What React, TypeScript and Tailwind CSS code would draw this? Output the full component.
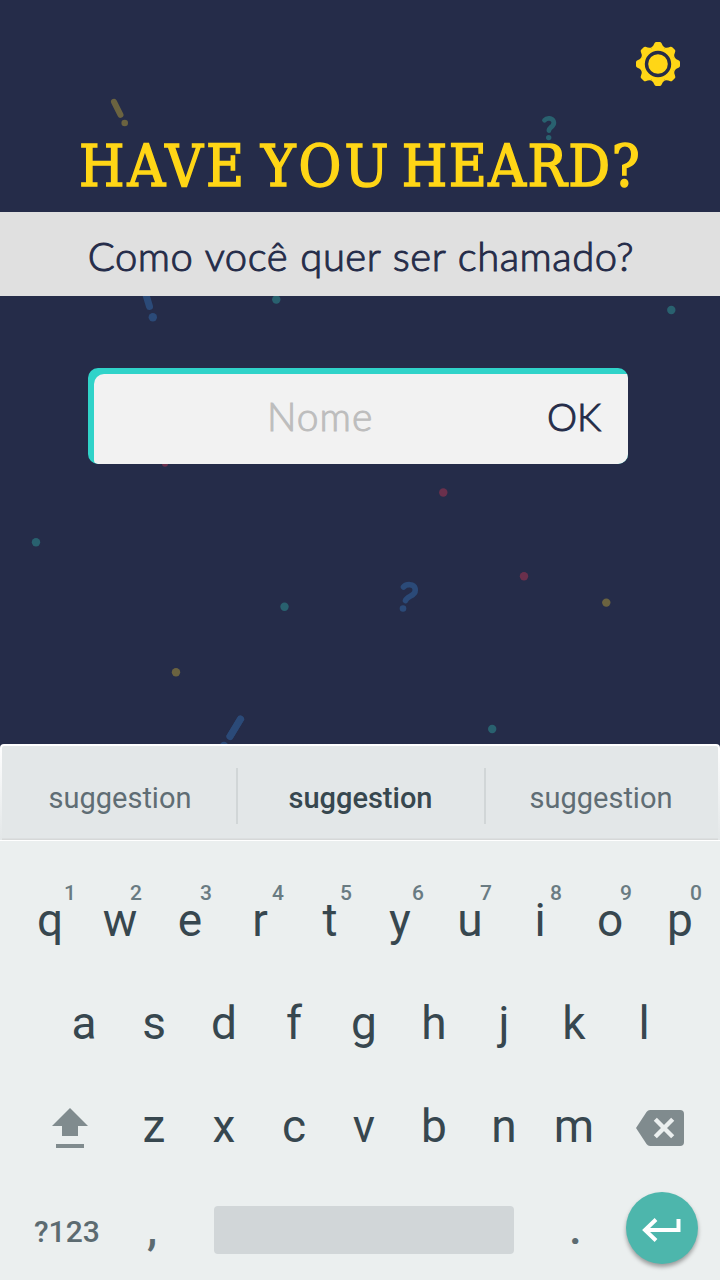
const TOP_KEYS: [string, string, string][] = [
  ["q", "1", "left-[49px]"],
  ["w", "2", "left-[45px]"],
  ["e", "3", "left-[45px]"],
  ["r", "4", "left-[47px]"],
  ["t", "5", "left-[45px]"],
  ["y", "6", "left-[47px]"],
  ["u", "7", "left-[45px]"],
  ["i", "8", "left-[45px]"],
  ["o", "9", "left-[45px]"],
  ["p", "0", "left-[45px]"],
];
const MIDDLE_KEYS = ["a", "s", "d", "f", "g", "h", "j", "k", "l"];
const BOTTOM_KEYS = ["z", "x", "c", "v", "b", "n", "m"];

const DOTS: [number, number, string][] = [
  [276.3, 299.5, "#29616f"],
  [671.3, 310, "#29616f"],
  [443.3, 492.5, "#6a304c"],
  [524, 576.2, "#6a304c"],
  [606.3, 602.6, "#6b6340"],
  [36, 542.3, "#29616f"],
  [284.5, 606.7, "#29616f"],
  [176, 672.2, "#6b6340"],
  [492.2, 729, "#29616f"],
];

function Confetti() {
  return (
    <svg className="absolute inset-0" width="720" height="744" viewBox="0 0 720 744" fill="none" strokeLinecap="round">
      {DOTS.map(([cx, cy, fill]) => (
        <circle key={`${cx}`} cx={cx} cy={cy} r="4.2" fill={fill} />
      ))}
      <circle cx="165" cy="463.7" r="3" fill="#6a304c" />
      <path d="M114 101.800l6.500 13" stroke="#6b6340" strokeWidth="6" />
      <circle cx="124.7" cy="123" r="3.3" fill="#6b6340" />
      <path d="M144.500 290l5 16.500" stroke="#2b4a78" strokeWidth="7" />
      <circle cx="152.8" cy="317.2" r="4.2" fill="#2b4a78" />
      <path d="M241.500 717.500l-12.500 20.500" stroke="#2b4a78" strokeWidth="7" strokeLinecap="butt" />
      <path d="M240.500 719l-10.500 17.500" stroke="#2b4a78" strokeWidth="7" />
      <circle cx="224" cy="746" r="4.2" fill="#2b4a78" />
      <path d="M544.500 120.200c1.200-1.400 3-2 5-1.800 4.300.5 5.500 4.700 3 7.400-1.700 1.800-3.400 2.600-3.600 4.700" stroke="#29616f" strokeWidth="4.8" />
      <circle cx="548.7" cy="137.6" r="2.7" fill="#29616f" />
      <path d="M403.500 587c1.500-1.600 4-2.500 6.500-2.300 6 .5 6.700 6.600 3 9.800-2.700 2.200-6.300 2.700-7.500 6" stroke="#2b4a78" strokeWidth="5.6" />
      <circle cx="403" cy="608.5" r="3.3" fill="#2b4a78" />
    </svg>
  );
}

function SunIcon() {
  return (
    <svg width="44" height="44" viewBox="-22 -22 44 44">
      {[0, 45, 90, 135, 180, 225, 270, 315].map((angle) => (
        <path
          key={angle}
          transform={`rotate(${angle})`}
          d="M-1.800 -22H1.800Q2.800 -22 3.400 -21Q4.800 -17.200 6.900 -16.500L1 0H-1L-6.900 -16.500Q-4.800 -17.200 -3.400 -21Q-2.800 -22 -1.800 -22Z"
          fill="#ffd616"
        />
      ))}
      <circle r="15.5" fill="#ffd616" />
      <circle r="11.5" fill="none" stroke="#252c49" strokeWidth="3.4" />
    </svg>
  );
}

function Key({ label }: { label: string }) {
  return <button className="flex h-[103px] w-[70px] items-center justify-center">{label}</button>;
}

function Keyboard() {
  return (
    <section className="h-[536px] bg-[#ebefef] font-['Roboto',sans-serif] text-[#37474f]">
      <div className="bg-[#252c49]">
        <div className="h-24 rounded-t-[4px] bg-linear-to-b from-white to-[#e3e7e8] px-0.5 pt-0.5">
          <div className="flex h-[94px] items-center rounded-t-[2px] bg-[#e3e7e8] pt-[6px] text-[29px] shadow-[inset_0_-1.500px_0_#d6d8d8]">
            <div className="flex h-14 w-[234px] items-center justify-center pt-1.5 pl-0.5 text-[#5f6d74]">suggestion</div>
            <div className="flex h-14 w-[250px] items-center justify-center border-x-2 border-[#d1d6d7] pt-1.5 pr-px font-medium">suggestion</div>
            <div className="flex h-14 grow items-center justify-center pt-1.5 pr-0.5 text-[#5f6d74]">suggestion</div>
          </div>
        </div>
      </div>
      <div className="h-px bg-white" />
      <div className="pt-[27px] text-[46px] leading-none">
        <div className="flex pl-[15px]">
          {TOP_KEYS.map(([label, digit, left]) => (
            <div key={label} className="relative">
              <Key label={label} />
              <span className={`absolute top-[15px] text-[21px] leading-none font-medium text-[#697b82] ${left}`}>{digit}</span>
            </div>
          ))}
        </div>
        <div className="flex pl-[49px]">
          {MIDDLE_KEYS.map((label) => (
            <Key key={label} label={label} />
          ))}
        </div>
        <div className="flex items-center">
          <svg className="mt-1 mr-[31px] ml-[52px] shrink-0" width="36" height="40" viewBox="0 0 36 40" fill="#808b8e">
            <path d="M18 0l18 18h-10v10H10V18H0zM4 36h28v4H4z" />
          </svg>
          {BOTTOM_KEYS.map((label) => (
            <Key key={label} label={label} />
          ))}
          <svg className="mt-1 ml-[27px] shrink-0" width="48" height="36" viewBox="0 0 48 36">
            <path d="M14 0H44Q48 0 48 4V32Q48 36 44 36H14Q12 36 10.500 34L0 18L10.500 2Q12 0 14 0Z" fill="#808b8e" />
            <path d="M19.300 9.300l17.400 17.400M36.700 9.300L19.300 26.700" stroke="#ebefef" strokeWidth="4.4" />
          </svg>
        </div>
        <div className="flex h-[102px] items-center text-[#5c6b71]">
          <div className="ml-[34px] w-[66px] pt-2 text-[30px] font-medium">?123</div>
          <div className="ml-[47px] w-[67px] font-medium">,</div>
          <div className="mt-1 h-12 w-[300px] rounded-[4px] bg-[#d1d6d8]" />
          <div className="ml-[55px] w-[57px] font-medium">.</div>
          <button className="flex size-[72px] items-center justify-center rounded-full bg-[#4db6ac] shadow-[0_3px_4px_rgba(0,0,0,0.35)]">
            <svg width="40" height="30" viewBox="0 0 40 30" fill="none" stroke="white" strokeWidth="4">
              <path d="M36.500 6v11H4M14 6.500L3 17L14 27.500" />
            </svg>
          </button>
        </div>
      </div>
    </section>
  );
}

export default function App() {
  return (
    <main className="flex h-[1280px] w-[720px] flex-col overflow-hidden bg-[#252c49]">
      <div className="relative h-[744px] shrink-0 overflow-hidden">
        <Confetti />
        <div className="relative">
          <div className="flex h-[126px] justify-end pt-[42px] pr-10">
            <SunIcon />
          </div>
          <h1 className="h-[86px] pl-[79px] font-['DejaVu_Serif_Condensed','DejaVu_Serif',serif] text-[58px] leading-[80px] [word-spacing:-6px] whitespace-nowrap text-[#ffd616] [-webkit-text-stroke:1.5px_#ffd616]">
            <span className="tracking-[3px]">HAVE</span>
            <span className="tracking-[3.200px]"> YOU</span>
            <span className="tracking-[1.500px] [word-spacing:-8px]"> HEARD?</span>
          </h1>
          <div className="flex h-[84px] items-center justify-center bg-[#e0e0e0] pt-1 font-['Lato',sans-serif] text-[40px] font-light whitespace-nowrap text-[#252c49] [-webkit-text-stroke:1px_#252c49]">
            <span className="pl-0.5 tracking-[0.500px] [word-spacing:1px]">Como você quer ser chamado?</span>
          </div>
          <form className="mt-[72px] ml-[88px] h-24 w-[540px] overflow-hidden rounded-[10px] bg-[#30d3c9] pt-1.5 pl-1.5 font-['Lato',sans-serif] text-[38px] font-light text-[#252c49]">
            <div className="flex h-[90px] items-center rounded-tl-[10px] rounded-bl-[4px] bg-[#f2f2f2] pb-1.5">
              <span className="ml-[173px] w-[280px] text-[39px] tracking-[1px] text-[#bdbdbd] [-webkit-text-stroke:1px_#bdbdbd]">Nome</span>
              <span className="[-webkit-text-stroke:1px_#252c49]">OK</span>
            </div>
          </form>
        </div>
      </div>
      <Keyboard />
    </main>
  );
}
